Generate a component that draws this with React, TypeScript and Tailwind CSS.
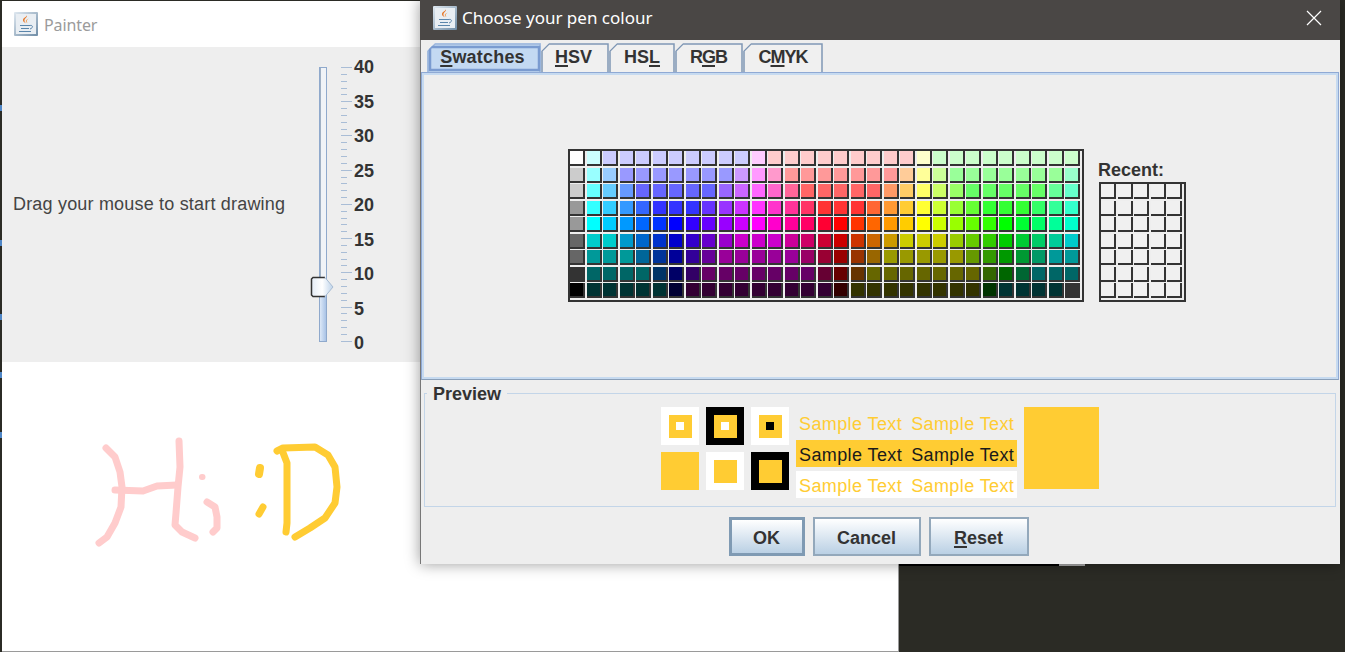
import type { ReactNode } from "react";

const SWATCHES = [
  "fff cff ccf ccf ccf ccf ccf ccf ccf ccf ccf fcf fcc fcc fcc fcc fcc fcc fcc fcc fcc ffc cfc cfc cfc cfc cfc cfc cfc cfc cfc",
  "ccc 9ff 9cf 99f 99f 99f 99f 99f 99f 99f c9f f9f f9c f99 f99 f99 f99 f99 f99 f99 fc9 ff9 cf9 9f9 9f9 9f9 9f9 9f9 9f9 9f9 9fc",
  "ccc 6ff 6cf 69f 66f 66f 66f 66f 66f 96f c6f f6f f6c f69 f66 f66 f66 f66 f66 f96 fc6 ff6 cf6 9f6 6f6 6f6 6f6 6f6 6f6 6f9 6fc",
  "999 3ff 3cf 39f 36f 33f 33f 33f 63f 93f c3f f3f f3c f39 f36 f33 f33 f33 f63 f93 fc3 ff3 cf3 9f3 6f3 3f3 3f3 3f3 3f6 3f9 3fc",
  "999 0ff 0cf 09f 06f 03f 00f 30f 60f 90f c0f f0f f0c f09 f06 f03 f00 f30 f60 f90 fc0 ff0 cf0 9f0 6f0 3f0 0f0 0f3 0f6 0f9 0fc",
  "666 0cc 0cc 09c 06c 03c 00c 30c 60c 90c c0c c0c c0c c09 c06 c03 c00 c30 c60 c90 cc0 cc0 cc0 9c0 6c0 3c0 0c0 0c3 0c6 0c9 0cc",
  "666 099 099 099 069 039 009 309 609 909 909 909 909 909 906 903 900 930 960 990 990 990 990 990 690 390 090 093 096 099 099",
  "333 066 066 066 066 036 006 306 606 606 606 606 606 606 606 603 600 630 660 660 660 660 660 660 660 360 060 063 066 066 066",
  "000 033 033 033 033 033 003 303 303 303 303 303 303 303 303 303 300 330 330 330 330 330 330 330 330 030 033 033 033 033 333",
];

const TABS = [
  { id: 1, before: "", key: "S", after: "watches", width: 114, text: "pr-[3px] tracking-[0.2px]" },
  { id: 2, before: "", key: "H", after: "SV", width: 68, text: "pr-[3px]" },
  { id: 3, before: "HS", key: "L", after: "", width: 66, text: "" },
  { id: 4, before: "R", key: "G", after: "B", width: 68, text: "tracking-[-1px] pr-[1px]" },
  { id: 5, before: "C", key: "M", after: "YK", width: 80, text: "tracking-[-1px]" },
];

const SCALE_LABELS = [40, 35, 30, 25, 20, 15, 10, 5, 0];
const TICKS = Array.from({ length: 41 }, (_, i) => i);
const SAMPLE_ROWS = [
  "text-[#ffcc33]",
  "bg-[#ffcc33] text-[#1a1a1a]",
  "bg-white text-[#ffcc33]",
];
const EDGE_SPECKS = ["top-[105px]", "top-[240px]", "top-[314px]", "top-[372px]", "top-[432px]"];

const JavaIcon = () => (
  <svg width="24" height="24" viewBox="0 0 24 24" className="shrink-0">
    <defs>
      <linearGradient id="javaFrame" x1="0" y1="0" x2="1" y2="1">
        <stop offset="0" stopColor="#dfe8f0" />
        <stop offset="1" stopColor="#6f8ca6" />
      </linearGradient>
    </defs>
    <rect x="0" y="0" width="24" height="24" rx="1" fill="url(#javaFrame)" />
    <rect x="2" y="2" width="20" height="20" fill="#e9eef3" />
    <path d="M12.5 3.5c1.5 1.5-2.500 3-2 5.500.2 1 1 1.600 1.200 2.200-2.200-1-3.200-2.400-2.600-3.900.5-1.400 3-2 3.400-3.800z" fill="#e8792b" />
    <path d="M15 6c-.5 1.200-2.300 1.800-2.200 3.200 0 .6.5 1.200.7 1.800-1.600-.6-2-1.700-1.500-2.700.5-1 2.300-1.300 3-2.300z" fill="#f0a35e" />
    <path d="M6 13h10v1H6zM7 16h8v1H7zM5 19h12v1H5z" fill="#5b86ab" />
    <path d="M16 13.500c3-.8 3.500 2.500 0 3.500" fill="none" stroke="#5b86ab" strokeWidth="1" />
  </svg>
);

const Underlined = ({ before, letter, after }: { before: string; letter: string; after: string }) => (
  <span>
    {before}
    <span className="underline underline-offset-2 decoration-2">{letter}</span>
    {after}
  </span>
);

const PreviewSquare = ({ frame, inner, dot }: { frame: string; inner?: boolean; dot?: string }) => (
  <div className={`w-[38px] h-[38px] flex items-center justify-center ${frame}`}>
    {inner && (
      <div className="w-[23px] h-[23px] bg-[#ffcc33] flex items-center justify-center">
        {dot && <div className={`w-2 h-2 ${dot}`} />}
      </div>
    )}
  </div>
);

const Slider = () => (
  <div className="flex h-[315px] pt-[12px] ml-auto mr-[524px] relative">
    <div className="relative w-[8px] h-[275px] mt-[8px] flex flex-col border border-[#8fa9cc] bg-[#f0f3f7]">
      <div className="flex-1 border-l border-[#9fb0c4]" />
      <div className="h-[62px] bg-linear-to-r from-[#dce8f7] to-[#a9c3e6]" />
    </div>
    <svg width="26" height="24" viewBox="0 0 26 24" className="absolute left-[-9px] top-[229px]">
      <defs>
        <linearGradient id="thumbFill" x1="0" y1="0" x2="1" y2="0">
          <stop offset="0" stopColor="#e3ebf5" />
          <stop offset="0.5" stopColor="#ffffff" />
          <stop offset="1" stopColor="#bcd2ea" />
        </linearGradient>
      </defs>
      <path d="M3 1.500h12l8 9.500-8 9.500H3l-1.500-1.500V3z" fill="url(#thumbFill)" />
      <path d="M15 20.500H3l-1.500-1.500V3L3 1.500h12" fill="none" stroke="#333" strokeWidth="1.500" />
      <path d="M15 1.500l8 9.500-8 9.500" fill="none" stroke="#a8bcd2" strokeWidth="1" />
    </svg>
    <div className="ml-[14px] mt-[8px] h-[275px] flex flex-col justify-between">
      {TICKS.map((tick) => (
        <div key={tick} className={`h-px bg-[#a9bdd6] ${tick % 5 === 0 ? "w-[11px]" : "w-[6px]"}`} />
      ))}
    </div>
    <div className="ml-[2px] mt-[-2px] h-[296px] flex flex-col justify-between text-[18px] leading-[20px] font-bold text-[#333]">
      {SCALE_LABELS.map((label) => (
        <div key={label}>{label}</div>
      ))}
    </div>
  </div>
);

const PainterWindow = () => (
  <div className="absolute left-[2px] top-px w-[897px] h-[651px] flex flex-col bg-white border-r border-b border-[#9a9a9a]">
    <div className="h-[46px] shrink-0 flex items-center pl-[12px] gap-[6px]">
      <JavaIcon />
      <span className="font-['Noto_Sans',sans-serif] text-[16px] tracking-[-0.1px] pt-[1px] text-[#9b9b9b]">Painter</span>
    </div>
    <div className="h-[315px] shrink-0 bg-[#eeeeee] flex items-center pl-[11px]">
      <span className="text-[18px] tracking-[0.19px] text-[#444]">Drag your mouse to start drawing</span>
      <Slider />
    </div>
    <div className="flex-1 relative overflow-hidden">
      <svg width="896" height="289" viewBox="2 362 896 289" className="block" fill="none" strokeWidth="7" strokeLinecap="round" strokeLinejoin="round">
        <g stroke="#ffcccc">
          <path d="M106 448 115 457 120 472 122 487 121 507 115 523 107 537 99 543" />
          <path d="M115 490 143 491 157 486 177 485" />
          <path d="M179 441 180 467 178 487 176 513 175 525 182 532 195 538" />
          <path d="M202 477h.5" strokeWidth="6" />
          <path d="M207 502 215 507 217 517 217 528 213 532" />
        </g>
        <g stroke="#ffcc33">
          <path d="M260 468 259 474" strokeWidth="8" />
          <path d="M263 507 259 514" />
          <path d="M277 451 283 448 315 447 328 455 335 467 337 487 335 503 325 518 310 528 295 537" />
          <path d="M282 450 287 463 287 523 286 532" />
        </g>
      </svg>
    </div>
  </div>
);

const SwatchCell = ({ color }: { color: string }) => (
  <div className="w-[15px] h-[15px] border-r-2 border-b-2 border-[#333]" style={{ backgroundColor: color }} />
);

const Swatches = () => (
  <div className="flex items-end pl-[144px] pt-[74px]">
    <div className="w-[516px] h-[153px] border-2 border-[#333]">
      <div className="grid grid-cols-[repeat(31,16.5px)] auto-rows-[16.5px]">
        {SWATCHES.flatMap((row, r) =>
          row.split(" ").map((hex, c) => <SwatchCell key={`${r}-${c}`} color={`#${hex}`} />)
        )}
      </div>
    </div>
    <div className="ml-[15px] w-[90px]">
      <div className="text-[18px] leading-[20px] font-bold text-[#333] mb-[2px] -ml-px">Recent:</div>
      <div className="w-[87px] h-[120px] border-2 border-[#333]">
        <div className="grid grid-cols-[repeat(5,16.5px)] auto-rows-[16.5px]">
          {Array.from({ length: 35 }, (_, i) => (
            <SwatchCell key={i} color="#f0f0f0" />
          ))}
        </div>
      </div>
    </div>
  </div>
);

const Preview = () => (
  <div className="relative ml-[3px] mr-[4px] mt-[13px] h-[114px] border-[1.5px] border-[#c3d5e8] flex pl-[236px] pt-[13px]">
    <span className="absolute left-[2px] top-[-10px] px-[6px] bg-[#eeeeee] text-[18px] leading-[20px] font-bold text-[#333]">Preview</span>
    <div className="grid grid-cols-[repeat(3,38px)] gap-x-[7px] gap-y-[7px] h-[83px]">
      <PreviewSquare frame="bg-white" inner dot="bg-white" />
      <PreviewSquare frame="bg-black" inner dot="bg-white" />
      <PreviewSquare frame="bg-white" inner dot="bg-black" />
      <PreviewSquare frame="bg-[#ffcc33]" />
      <PreviewSquare frame="bg-white" inner />
      <PreviewSquare frame="bg-black" inner />
    </div>
    <div className="ml-[7px] w-[221px] flex flex-col gap-[4px] mt-[2px]">
      {SAMPLE_ROWS.map((row) => (
        <div key={row} className={`h-[27px] flex items-center gap-[9px] pl-[3px] pt-[4px] text-[18px] tracking-[0.4px] ${row}`}>
          <span>Sample Text</span>
          <span>Sample Text</span>
        </div>
      ))}
    </div>
    <div className="ml-[7px] w-[75px] h-[82px] bg-[#ffcc33]" />
  </div>
);

const DialogButton = ({ width, focused, children }: { width: string; focused?: boolean; children: ReactNode }) => (
  <button
    className={`h-[39px] pt-[3px] ${width} ${focused ? "border-[3px] border-[#7f9ab3]" : "border-2 border-[#93a8bb]"} bg-linear-to-b from-white to-[#bad0e4] text-[18px] font-bold text-[#333] flex items-center justify-center`}
  >
    {children}
  </button>
);

const ColourDialog = () => (
  <div className="absolute left-[420px] top-0 w-[920px] h-[564px] flex flex-col bg-[#eeeeee] shadow-[0_0_14px_rgba(0,0,0,0.4)]">
    <div className="h-10 shrink-0 bg-[#4a4745] flex items-center pl-[13px] pb-[4px] gap-[5px]">
      <JavaIcon />
      <span className="font-['Noto_Sans',sans-serif] text-[17px] text-white">Choose your pen colour</span>
      <svg width="16" height="16" viewBox="0 0 16 16" className="ml-auto mr-[18px]" stroke="#fff" strokeWidth="1.200">
        <path d="M1 1l14 14M15 1 1 15" />
      </svg>
    </div>
    <div className="flex-1 border-l border-[#777] flex flex-col min-h-0">
      <div className="h-[32px] shrink-0 flex pl-[6px] pt-[3px] relative z-10">
        {TABS.map((tab) => (
          <div
            key={tab.id}
            className={`relative h-[29px] flex items-center justify-center text-[18px] font-bold text-[#333] ${tab.text} ${tab.id === 1 ? "bg-[#c3d9f2]" : "bg-[#f0f0f0]"} [clip-path:polygon(8px_0,100%_0,100%_100%,0_100%,0_8px)]`}
            style={{ width: tab.width }}
          >
            <svg width={tab.width} height="29" className="absolute inset-0" fill="none" stroke={tab.id === 1 ? "#9db5da" : "#7f97b5"} strokeWidth="1.500">
              <path d={`M1 29V8L8 1H${tab.width - 1}V29`} />
              {tab.id === 1 && <rect x="3" y="4" width={tab.width - 5} height="23" stroke="#7a9bd0" strokeWidth="2.500" />}
            </svg>
            <span className="relative">
              <Underlined before={tab.before} letter={tab.key} after={tab.after} />
            </span>
          </div>
        ))}
      </div>
      <div className="h-[308px] shrink-0 mr-px border border-[#8fa9d4] border-b-[#8a9fb8]">
        <div className="h-full border-2 border-[#c6daf0]">
          <Swatches />
        </div>
      </div>
      <Preview />
      <div className="flex justify-center gap-[8px] mt-[10px] pr-[4px]">
        <DialogButton width="w-[76px]" focused>
          OK
        </DialogButton>
        <DialogButton width="w-[108px]">Cancel</DialogButton>
        <DialogButton width="w-[100px]">
          <Underlined before="" letter="R" after="eset" />
        </DialogButton>
      </div>
    </div>
  </div>
);

const App = () => {
  return (
    <div className="relative w-[1345px] h-[652px] overflow-hidden bg-[#2b2b25] font-['Liberation_Sans',Arial,sans-serif]">
      {EDGE_SPECKS.map((top) => (
        <div key={top} className={`absolute left-0 w-[2px] h-[6px] bg-[#4f86c6] ${top}`} />
      ))}
      <PainterWindow />
      <div className="absolute left-[899px] top-[564px] w-[160px] h-[2px] bg-black" />
      <div className="absolute left-[1059px] top-[564px] w-[26px] h-[2px] bg-[#aaaaaa]" />
      <ColourDialog />
    </div>
  );
};

export default App;
